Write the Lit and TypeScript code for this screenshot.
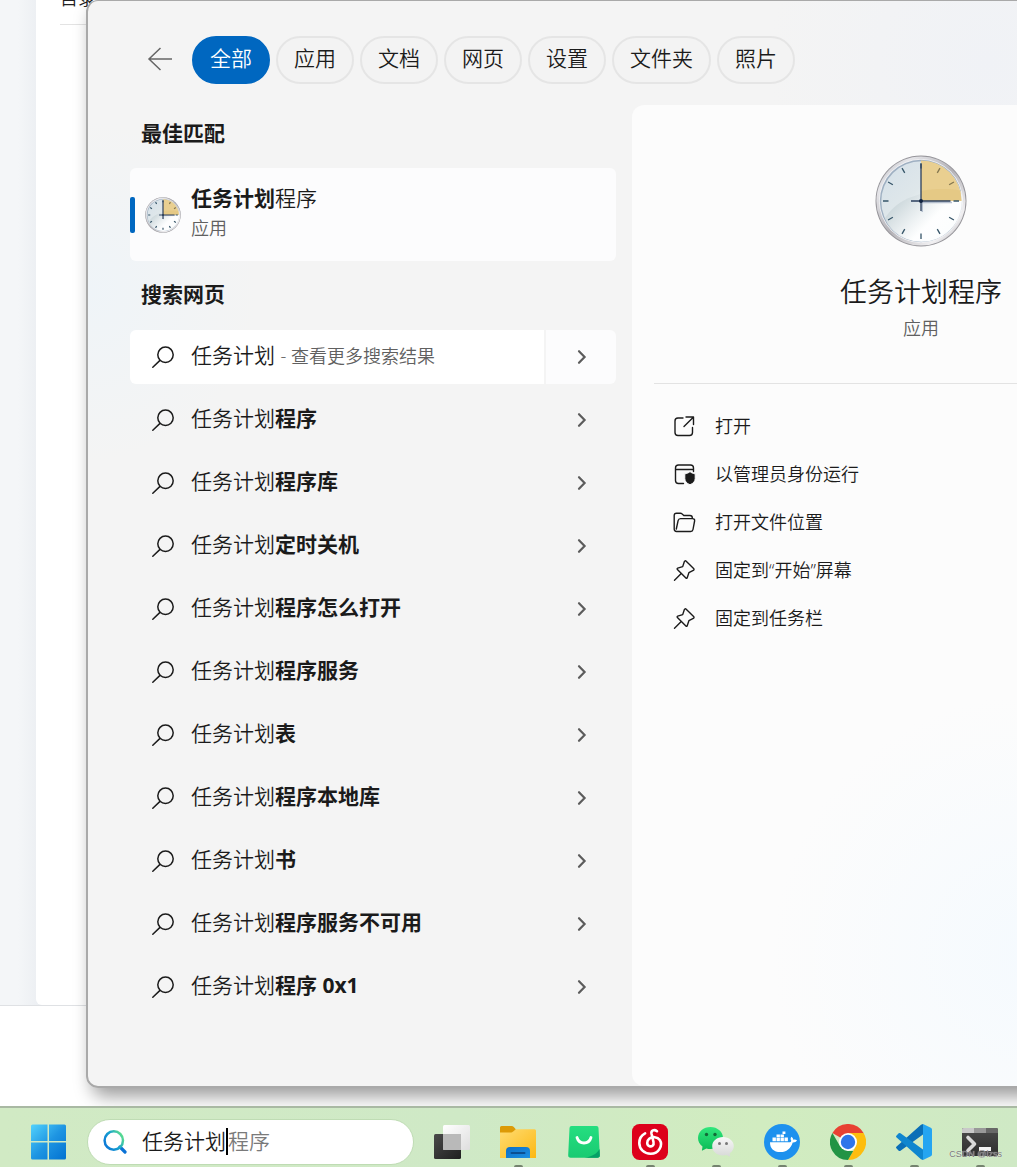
import { LitElement, html, svg, css } from "lit";
import { customElement, property, state } from "lit/decorators.js";

const TABS = ["全部", "应用", "文档", "网页", "设置", "文件夹", "照片"];
const QUERY = "任务计划";
const SUGGESTIONS = [
  "程序",
  "程序库",
  "定时关机",
  "程序怎么打开",
  "程序服务",
  "表",
  "程序本地库",
  "书",
  "程序服务不可用",
  "程序 0x1",
];

const searchIcon = html`<svg class="glyph" viewBox="0 0 24 24" width="24" height="24" aria-hidden="true">
  <circle cx="14.5" cy="9.8" r="7.7" /><path d="M9 15.400 1.800 22.200" />
</svg>`;

const chevronIcon = html`<svg class="chevron" viewBox="0 0 12 16" width="12" height="16" aria-hidden="true">
  <path d="M3 2.2 8.6 8 3 13.8" />
</svg>`;

const pinIcon = svg`<path d="M13.2 2.2 20.6 9.4c.7.7.5 1.6-.3 2l-4.4 2.3-1.7 5c-.2.7-.8.8-1.3.3L4.4 10.500c-.5-.5-.3-1.100.3-1.300l5-1.600 1.600-4.900c.3-.9 1.200-1.200 1.900-.5ZM8 14.700 1.500 21.300" />`;

const ACTIONS = [
  {
    label: "打开",
    icon: svg`<path d="M10 3H5a3 3 0 0 0-3 3v11.500a3 3 0 0 0 3 3h11.500a3 3 0 0 0 3-3V12.500M13 2h7.500v7.500M20.300 2.200 11 11.500" />`,
  },
  {
    label: "以管理员身份运行",
    icon: svg`<path d="M10.500 20.500H5.500a3 3 0 0 1-3-3V5a3 3 0 0 1 3-3h12a3 3 0 0 1 3 3v3.500M2.500 6.500h18" /><path class="solid" d="M17 8.600c1.600 1.400 3 2 5.200 2.200v4.700c0 3-2 5-5.200 6.200-3.200-1.200-5.200-3.200-5.200-6.200v-4.700c2.200-.2 3.600-.8 5.200-2.200Z" />`,
  },
  {
    label: "打开文件位置",
    icon: svg`<path d="M3.600 20.500C2 20.500 1.200 19.500 1.200 18V4.500A2.300 2.300 0 0 1 3.500 2.200h4c.6 0 1 .2 1.400.6L10.800 4.500H17a2.300 2.300 0 0 1 2.300 2.300v.8M3.600 20.500h14c1.200 0 2.200-.8 2.400-2l1.600-8.500c.3-1.300-.6-2.400-2-2.400H7.500c-1.200 0-2.100.8-2.400 2L3.300 18" />`,
  },
  { label: "固定到“开始”屏幕", icon: pinIcon },
  { label: "固定到任务栏", icon: pinIcon },
];

const APPS = [
  {
    name: "任务视图",
    running: false,
    icon: svg`<defs>
        <linearGradient id="tvd" x1="0" y1="0" x2="1" y2="1"><stop offset="0" stop-color="#4a4a4a" /><stop offset="1" stop-color="#1f1f1f" /></linearGradient>
        <linearGradient id="tvl" x1="0" y1="0" x2="1" y2="1"><stop offset="0" stop-color="#fff" /><stop offset="1" stop-color="#dedede" /></linearGradient>
      </defs>
      <rect x="0" y="10" width="27" height="25" rx="1.500" fill="url(#tvd)" />
      <rect x="9" y="1" width="27" height="25" rx="1.500" fill="url(#tvl)" />
      <path d="M9 10h18v16H10.500A1.500 1.500 0 0 1 9 24.500Z" fill="#b9b9b9" />`,
  },
  {
    name: "文件资源管理器",
    running: true,
    icon: svg`<defs>
        <linearGradient id="fxy" x1="0" y1="0" x2="1" y2="1"><stop offset="0" stop-color="#ffdc72" /><stop offset="1" stop-color="#fcb813" /></linearGradient>
        <linearGradient id="fxb" x1="0" y1="0" x2="1" y2="1"><stop offset="0" stop-color="#0f6fc5" /><stop offset="1" stop-color="#1a8fe3" /></linearGradient>
      </defs>
      <path d="M0 3.500A1.500 1.500 0 0 1 1.500 2h10c1 0 1.700.4 2.300 1L16 5.500 13 9H0Z" fill="#dc9a06" />
      <path d="M0 8.500h10.500c1.300 0 2-.3 3-1.200l1.700-1.500c.5-.5 1-.6 1.800-.6h17.500A1.500 1.500 0 0 1 36 6.700V34H0Z" fill="url(#fxy)" />
      <path d="M6 34v-7a4 4 0 0 1 4-4h16a4 4 0 0 1 4 4v7Z" fill="url(#fxb)" />
      <path d="M11.500 29h13" stroke="#0b4f92" stroke-width="2" stroke-linecap="round" />`,
  },
  {
    name: "应用商店",
    running: false,
    icon: svg`<defs><linearGradient id="st" x1="0" y1="0" x2="0" y2="1"><stop offset="0" stop-color="#25de80" /><stop offset="1" stop-color="#19cb72" /></linearGradient></defs>
      <path d="M5.500 2h25a2 2 0 0 1 2 2l1.300 27a2.500 2.500 0 0 1-2.500 2.700H4.700A2.500 2.500 0 0 1 2.200 31L3.500 4a2 2 0 0 1 2-2Z" fill="url(#st)" />
      <path d="M33.600 25c-2.500 4.500-7 7.500-15 8.700h12.700a2.500 2.500 0 0 0 2.500-2.700Z" fill="#05a066" />
      <path d="M11 13.500c1 3.500 4 5.500 7 5.500s6-2 7-5.500" fill="none" stroke="#fff" stroke-width="2.800" stroke-linecap="round" />`,
  },
  {
    name: "网易云音乐",
    running: true,
    icon: svg`<rect width="36" height="36" rx="7.500" fill="#dd001b" />
      <g fill="none" stroke="#fff" stroke-width="2.600" stroke-linecap="round">
        <path d="M25 7.200c-2.800-2.200-6.200-.7-5.500 2.600l2 8.200c.8 3.400-2 4.900-4 4.200-3-1-3-5.200-.3-7.400 3-2.500 8.300-2.200 10.600 1.200 3.300 5.200-.8 13.800-9.200 13.800-6.500 0-11.300-4.700-11.300-10.800 0-4.200 2-7.800 5.800-9.700" />
      </g>`,
  },
  {
    name: "微信",
    running: true,
    icon: svg`<defs>
        <linearGradient id="wg" x1="0" y1="0" x2="0" y2="1"><stop offset="0" stop-color="#31e67c" /><stop offset="1" stop-color="#0abb56" /></linearGradient>
        <linearGradient id="ww" x1="0" y1="0" x2="0" y2="1"><stop offset="0" stop-color="#f7f7f7" /><stop offset="1" stop-color="#d7d9d7" /></linearGradient>
      </defs>
      <path d="M12.500 3C5.500 3 0 7.600 0 14.100c0 3.400 1.700 6.400 4.500 8.400l-.6 4.300 4.500-2.400c1.300.4 2.700.6 4.100.6C19.500 25 25 20.300 25 14.100S19.500 3 12.500 3Z" fill="url(#wg)" />
      <circle cx="8.500" cy="10.500" r="1.700" fill="#126b38" /><circle cx="17" cy="10.500" r="1.700" fill="#126b38" />
      <path d="M25 13c-6 0-10.800 4-10.800 9.200s4.800 9.200 10.800 9.200c1.200 0 2.400-.2 3.500-.5l3.700 1.900-.5-3.500c2.400-1.700 4.100-4.200 4.100-7.100C35.800 17 31 13 25 13Z" fill="url(#ww)" />
      <circle cx="21.500" cy="19.500" r="1.500" fill="#777" /><circle cx="28.500" cy="19.500" r="1.500" fill="#777" />`,
  },
  {
    name: "Docker",
    running: true,
    icon: svg`<circle cx="18" cy="18" r="18" fill="#1d91ee" />
      <g fill="#fff">
        <path d="M6 18.200h20c.8-.3 1.200-.8 1.300-1.500-1-1-.9-2.800.2-4 1.200.9 1.800 1.900 1.700 3 1.400-.4 2.800-.2 3.800.5-.8 1.600-2.300 2.300-4.300 2.200C26.800 24.500 22.500 28 16.500 28 9.500 28 6 24.500 6 18.200Z" />
        <path d="M8.500 13.600h3.400v3.600H8.500zM12.500 13.600h3.400v3.600h-3.400zM16.500 13.600h3.400v3.600h-3.400zM20.500 13.600h3.400v3.600h-3.400zM12.500 10.500h3.400v2.500h-3.400zM16.500 10.500h3.400v2.500h-3.400zM18.500 7.500h2.900v2.400h-2.900z" />
      </g>`,
  },
  {
    name: "Chrome",
    running: true,
    icon: svg`<path d="M18 18 2.400 9A18 18 0 0 1 33.600 9Z" fill="#e84133" />
      <path d="M18 9h15.600A18 18 0 0 1 18 36l7.800-13.500Z" fill="#fdbd0e" />
      <path d="M2.400 9 10.200 22.500 18 27h5.200L18 36A18 18 0 0 1 2.400 9Z" fill="#239445" />
      <circle cx="18" cy="18" r="9" fill="#fff" /><circle cx="18" cy="18" r="7.200" fill="#2f75ea" />`,
  },
  {
    name: "Visual Studio Code",
    running: true,
    icon: svg`<path d="M27 0v10.500L4.500 26.800a1.500 1.500 0 0 1-1.800-.1L.6 24.600a1.500 1.500 0 0 1 0-2.200L25 .7Z" fill="#0a6fb7" />
      <path d="M27 36V25.500L4.500 9.200a1.500 1.500 0 0 0-1.800.1L.6 11.400a1.500 1.500 0 0 0 0 2.200L25 35.300Z" fill="#0f86cf" />
      <path d="M27 0 34.800 3.700A2 2 0 0 1 36 5.500v25a2 2 0 0 1-1.200 1.800L27 36Z" fill="#25a5f1" />`,
  },
  {
    name: "终端",
    running: true,
    icon: svg`<defs><linearGradient id="tm" x1="0" y1="0" x2="0" y2="1"><stop offset="0" stop-color="#4b4b4b" /><stop offset="1" stop-color="#2d2d2d" /></linearGradient></defs>
      <rect x="0" y="4" width="36" height="28" rx="1.500" fill="url(#tm)" />
      <path d="M0 9V5.500A1.500 1.500 0 0 1 1.500 4H12v5Z" fill="#c9c9c9" />
      <path d="M12 4h12v5H12z" fill="#999" /><path d="M24 4h10.500A1.500 1.500 0 0 1 36 5.500V9H24Z" fill="#686868" />
      <path d="M6 13.500 12.500 20 6 26.500" fill="none" stroke="#dadada" stroke-width="3.600" stroke-linecap="round" stroke-linejoin="round" />
      <rect x="17" y="23" width="12" height="4" fill="#f4f4f4" />`,
  },
];

const baseStyles = css`
  *,
  *::before,
  *::after {
    box-sizing: border-box;
  }
  button,
  input {
    margin: 0;
    padding: 0;
    border: 0;
    background: none;
    color: inherit;
    font: inherit;
    text-align: left;
  }
  b {
    font-weight: 700;
  }
  svg {
    display: block;
    flex: none;
  }
`;

@customElement("clock-face")
class ClockFace extends LitElement {
  @property({ type: Number }) size = 92;

  static styles = css`
    :host {
      display: block;
      flex: none;
    }
    svg {
      display: block;
    }
  `;

  render() {
    const ticks = [0, 30, 60, 90, 120, 150, 180, 210, 240, 270, 300, 330];
    const stroke = this.size < 50 ? 3 : 1.3;
    return html`<svg viewBox="0 0 92 92" width=${this.size} height=${this.size} aria-hidden="true">
      <defs>
        <linearGradient id="rim" x1="0" y1="0" x2="1" y2="1">
          <stop offset="0" stop-color="#a9abb0" /><stop offset=".2" stop-color="#e6e6ea" />
          <stop offset=".5" stop-color="#b3b1b6" /><stop offset=".8" stop-color="#f1f0f2" />
          <stop offset="1" stop-color="#a09ea3" />
        </linearGradient>
        <linearGradient id="face" x1="0" y1="0" x2="1" y2="1">
          <stop offset="0" stop-color="#d4e0e9" /><stop offset=".4" stop-color="#dfe7ea" />
          <stop offset=".7" stop-color="#fbfdfe" /><stop offset="1" stop-color="#eef6fa" />
        </linearGradient>
        <linearGradient id="shade" x1="0" y1=".2" x2=".8" y2=".7">
          <stop offset="0" stop-color="#bccbd0" stop-opacity=".9" /><stop offset=".75" stop-color="#fff" stop-opacity=".7" />
        </linearGradient>
      </defs>
      <circle cx="46" cy="46" r="45.500" fill="#96959a" />
      <circle cx="46" cy="46" r="44.600" fill="url(#rim)" />
      <circle cx="46" cy="46" r="42" fill="#f3f3f5" />
      <circle cx="46" cy="46" r="41.200" fill="#9fb0c2" />
      <circle cx="46.500" cy="46.500" r="40.200" fill="url(#face)" />
      <path d="M10 63C21 45 45 33 86.500 36.500a41 41 0 0 1-33 49.500C33 88 16 80 10 63Z" fill="url(#shade)" />
      <path d="M46 46V5.500A40.500 40.500 0 0 1 86.500 46Z" fill="#e9cf90" />
      <path d="M46 46V36c13-2.500 27-2.500 39.500-.5l1 10.500Z" fill="#e2c47e" opacity=".6" />
      ${ticks.map(
        (a) =>
          svg`<path d="M46 8v5.500" stroke=${a > 0 && a < 90 ? "#83764f" : "#355468"} stroke-width=${stroke} transform="rotate(${a} 46 46)" />`
      )}
      <path d="M47 47.500h30M47.200 48v9" stroke="#8c9bb4" stroke-width="1.500" opacity=".6" />
      <path d="M46 9v47M36 46h39.500" stroke="#2b3f5d" stroke-width=${stroke} />
      <circle cx="46" cy="46" r="2" fill="#10233f" />
    </svg>`;
  }
}

@customElement("search-panel")
class SearchPanel extends LitElement {
  @state() private tab = 0;

  static styles = [
    baseStyles,
    css`
      :host {
        display: block;
        color: #1b1b1b;
      }
      .frame {
        display: grid;
        grid-template-rows: 104px 1fr;
        height: 100%;
        border: 2px solid #a9a9a9;
        border-top-width: 1px;
        border-radius: 12px;
        overflow: hidden;
        background: radial-gradient(circle at 0 290px, #eff4f8, transparent 170px),
          radial-gradient(circle at 900px 60px, #f0f2f6, transparent 220px), #f4f4f4;
      }
      .tabs {
        display: flex;
        gap: 6px;
        align-items: center;
        padding: 6px 0 0 59px;
        height: 112px;
      }
      .back {
        width: 26px;
        margin-right: 13px;
        padding-bottom: 2px;
      }
      .back path {
        fill: none;
        stroke: #666;
        stroke-width: 1.500;
      }
      .tab {
        height: 48px;
        padding: 0 16px 4px;
        border: 2px solid #e5e5e5;
        border-radius: 24px;
        background: #f3f3f3;
        white-space: nowrap;
      }
      .tab.active {
        border-color: #0067c0;
        background: #0067c0;
        color: #fff;
      }
      .body {
        display: grid;
        grid-template-columns: 486px 1fr;
        gap: 16px;
        padding-left: 42px;
      }
      h2 {
        margin: 0;
        padding-left: 11px;
        font-size: 21px;
        line-height: 30px;
      }
      .results {
        padding-top: 13px;
      }
      .best {
        display: flex;
        align-items: center;
        gap: 10px;
        width: 100%;
        height: 93px;
        margin: 20px 0 18px;
        border-radius: 6px;
        background: #fcfcfd;
      }
      .best::before {
        content: "";
        width: 5px;
        height: 36px;
        border-radius: 2px;
        background: #0067c0;
      }
      .best-text {
        display: grid;
        line-height: 30px;
        padding-bottom: 3px;
      }
      .muted {
        color: #606060;
        font-size: 18px;
      }
      .list {
        display: grid;
        gap: 9px;
        margin: 21px 0 0;
        padding: 0;
        list-style: none;
      }
      .row {
        display: grid;
        grid-template-columns: 1fr 70px;
        gap: 2px;
        height: 54px;
        border-radius: 6px;
        overflow: hidden;
      }
      .row.current .query {
        background: #fff;
      }
      .row.current .more {
        background: #fcfcfd;
      }
      .query {
        display: flex;
        align-items: center;
        gap: 16px;
        padding-left: 21px;
        white-space: pre;
      }
      .label {
        padding-bottom: 4px;
      }
      .glyph {
        fill: none;
        stroke: #1b1b1b;
        stroke-width: 1.500;
        stroke-linecap: round;
        stroke-linejoin: round;
      }
      .more {
        display: grid;
        place-items: center;
        padding-left: 1px;
      }
      .chevron path {
        fill: none;
        stroke: #5c5c5c;
        stroke-width: 2.200;
        stroke-linecap: round;
      }
      .detail {
        display: flex;
        flex-direction: column;
        padding: 50px 22px 0;
        border-radius: 12px;
        background: radial-gradient(circle at 400px 850px, #f5fafe, transparent 260px), #fcfcfc;
      }
      .hero {
        display: grid;
        justify-items: center;
        padding-bottom: 39px;
        border-bottom: 1px solid #e3e3e3;
      }
      h1 {
        margin: 25px 0 0;
        font-size: 27px;
        font-weight: inherit;
        line-height: 40px;
      }
      .hero .muted {
        line-height: 32px;
      }
      .actions {
        display: grid;
        padding: 18px 0 0 19px;
      }
      .action {
        display: flex;
        align-items: center;
        gap: 19px;
        height: 48px;
        font-size: 18px;
      }
      .action .glyph {
        stroke-width: 1.400;
      }
      .action .glyph .solid {
        fill: #1b1b1b;
        stroke: #fcfcfd;
        stroke-width: 1;
      }
    `,
  ];

  render() {
    return html`<section class="frame" aria-label="搜索">
      <nav class="tabs">
        <button class="back" aria-label="返回">
          <svg viewBox="0 0 26 26" width="26" height="26" aria-hidden="true"><path d="M13.500 2 2 13l11.500 11M2 13H25" /></svg>
        </button>
        ${TABS.map(
          (t, i) => html`<button class="tab ${i === this.tab ? "active" : ""}" @click=${() => (this.tab = i)}>${t}</button>`
        )}
      </nav>
      <div class="body">
        <div class="results">
          <h2>最佳匹配</h2>
          <button class="best">
            <clock-face .size=${36}></clock-face>
            <span class="best-text"><span><b>任务计划</b>程序</span><span class="muted">应用</span></span>
          </button>
          <h2>搜索网页</h2>
          <ul class="list">
            <li class="row current">
              <button class="query">
                ${searchIcon}<span class="label">${QUERY} <span class="muted">- 查看更多搜索结果</span></span>
              </button>
              <button class="more" aria-label="更多">${chevronIcon}</button>
            </li>
            ${SUGGESTIONS.map(
              (s) => html`<li class="row">
                <button class="query">${searchIcon}<span class="label">${QUERY}<b>${s}</b></span></button>
                <button class="more" aria-label="更多">${chevronIcon}</button>
              </li>`
            )}
          </ul>
        </div>
        <div class="detail">
          <div class="hero">
            <clock-face .size=${92}></clock-face>
            <h1>任务计划程序</h1>
            <span class="muted">应用</span>
          </div>
          <div class="actions">
            ${ACTIONS.map(
              (a) => html`<button class="action">
                <svg class="glyph" viewBox="0 0 23 23" width="23" height="23" aria-hidden="true">${a.icon}</svg>${a.label}
              </button>`
            )}
          </div>
        </div>
      </div>
    </section>`;
  }
}

@customElement("task-bar")
class TaskBar extends LitElement {
  static styles = [
    baseStyles,
    css`
      :host {
        display: flex;
        align-items: flex-start;
        gap: 20px;
        padding: 11px 0 2px 31px;
        border-top: 2px solid #a9b9a3;
        background: linear-gradient(90deg, #d1eac4, #cfe9c6 45%, #d1ecc0 75%, #cfe9c5);
        overflow: hidden;
      }
      .start,
      .app {
        display: grid;
        place-items: center;
        flex: none;
        width: 36px;
        height: 46px;
      }
      .search {
        display: flex;
        align-items: center;
        flex: none;
        width: 327px;
        height: 46px;
        padding: 0 14px 2px;
        border: 1px solid #bfdcb4;
        border-radius: 23px;
        background: #fff;
        color: #1b1b1b;
      }
      .field {
        width: 84px;
        height: 30px;
        margin-left: 14px;
        outline: 0;
      }
      .caret {
        width: 2px;
        height: 27px;
        background: #000;
      }
      .ghost {
        color: #7a7a7a;
      }
      .apps {
        display: flex;
        gap: 30px;
      }
      .app {
        position: relative;
      }
      .app.running::after {
        content: "";
        position: absolute;
        top: 46px;
        left: 14px;
        width: 9px;
        height: 4px;
        border-radius: 2px;
        background: #74836e;
      }
    `,
  ];

  render() {
    return html`<button class="start" aria-label="开始">
        <svg viewBox="0 0 36 36" width="36" height="36" aria-hidden="true">
          <defs><linearGradient id="win" gradientUnits="userSpaceOnUse" x1="0" y1="0" x2="36" y2="36">
            <stop offset="0" stop-color="#53d3fd" /><stop offset=".5" stop-color="#1e95e2" /><stop offset="1" stop-color="#0070d0" />
          </linearGradient></defs>
          <path fill="url(#win)" d="M1.500 .5H16.500V17H0V2A1.500 1.500 0 0 1 1.500 .5ZM18 .5H33.500A1.500 1.500 0 0 1 35 2v15H18ZM0 18.500h16.500v17h-15A1.500 1.500 0 0 1 0 34ZM18 18.500h17V34a1.500 1.500 0 0 1-1.500 1.500H18Z" />
        </svg>
      </button>
      <label class="search">
        <svg viewBox="0 0 26 26" width="26" height="26" aria-hidden="true">
          <defs><linearGradient id="lens" x1="0" y1=".8" x2="1" y2=".2">
            <stop offset="0" stop-color="#0c76d8" /><stop offset=".5" stop-color="#15a0cf" /><stop offset="1" stop-color="#5fe18a" />
          </linearGradient></defs>
          <path d="M18 19 23 24" stroke="#0a72d6" stroke-width="3.200" stroke-linecap="round" />
          <circle cx="11.800" cy="12.500" r="9.200" fill="none" stroke="url(#lens)" stroke-width="2.500" />
        </svg>
        <input class="field" type="text" aria-label="搜索" .value=${QUERY} />
        <span class="caret"></span><span class="ghost">程序</span>
      </label>
      <div class="apps">
        ${APPS.map(
          (a) => html`<button class="app ${a.running ? "running" : ""}" aria-label=${a.name}>
            <svg viewBox="0 0 36 36" width="36" height="36" aria-hidden="true">${a.icon}</svg>
          </button>`
        )}
      </div>`;
  }
}

@customElement("app-root")
class AppRoot extends LitElement {
  static styles = [
    baseStyles,
    css`
      :host {
        display: grid;
        grid-template-rows: 1fr 61px;
        height: 100vh;
        overflow: hidden;
        position: relative;
        background: #fff;
        font-family: "Open Sans", "Noto Sans CJK SC", sans-serif;
        font-size: 21px;
        font-weight: 350;
        line-height: 30px;
      }
      .desktop {
        position: relative;
        overflow: hidden;
        min-height: 0;
      }
      .page {
        display: grid;
        grid-template-columns: 36px 1fr;
        height: calc(100% - 100px);
        border-bottom: 1px solid #dfe1e4;
        background: linear-gradient(90deg, #f4f6f8 18px, #eaedf1 44px);
      }
      .sheet {
        grid-column: 2;
        padding-left: 24px;
        border-radius: 0 0 0 6px;
        background: #fff;
      }
      .toc {
        height: 25px;
        border-bottom: 1px solid #e3e3e3;
        overflow: hidden;
      }
      .toc span {
        display: block;
        margin-top: -17px;
        font-size: 18px;
        color: #222;
      }
      .window {
        position: absolute;
        top: 0;
        bottom: 18px;
        left: 86px;
        width: 1126px;
        border-radius: 12px;
        box-shadow: 6px 8px 18px rgba(0, 0, 0, 0.4);
      }
      .watermark {
        position: absolute;
        right: 15px;
        bottom: 6px;
        color: #777;
        font: 9px/14px "Liberation Sans", sans-serif;
        text-shadow: 0 0 1px #fff;
      }
    `,
  ];

  render() {
    return html`<main class="desktop">
        <div class="page"><div class="sheet"><div class="toc"><span>目录</span></div></div></div>
        <search-panel class="window"></search-panel>
      </main>
      <task-bar></task-bar>
      <span class="watermark">CSDN @lzss</span>`;
  }
}
